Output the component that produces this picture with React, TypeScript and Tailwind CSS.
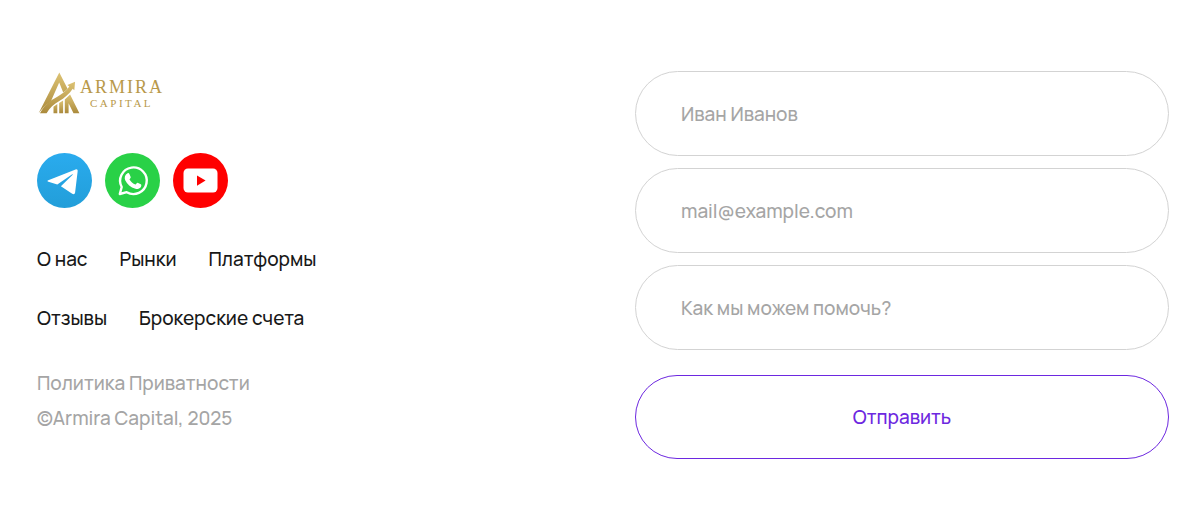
import React from "react";

const NAV_LINKS = ["О нас", "Рынки", "Платформы", "Отзывы", "Брокерские счета"];

const FIELDS = [
  { id: "name", type: "text", label: "Имя", placeholder: "Иван Иванов" },
  { id: "email", type: "email", label: "Email", placeholder: "mail@example.com" },
  { id: "message", type: "text", label: "Сообщение", placeholder: "Как мы можем помочь?" },
];

const Logo: React.FC = () => (
  <svg viewBox="0 1 126 44" className="w-[126px] h-11" role="img" aria-label="Armira Capital">
    <defs>
      <linearGradient id="gold" x1="0" y1="0" x2="0" y2="1">
        <stop offset="0" stopColor="#dcc273" />
        <stop offset="1" stopColor="#ab8a3c" />
      </linearGradient>
    </defs>
    <g fill="url(#gold)">
      {/* Two upper sides of the A */}
      <path d="M22.300 2.500 1.600 43.200c3.200-4.600 7.200-8.200 12-11.200L22.200 12.500l4 10c1.700-1.200 3.100-2.400 4.400-3.800z" />
      {/* Rising arrow */}
      <path d="M3 43.200h6.600c3-5.300 7.200-9 12.700-12.200 5.600-3.300 9.900-7 13.400-12.200l1.600 1.400.8-8.400-7.700 3.300 1.900 1.500c-3.200 4.600-7 7.400-12 10.200C12.300 31 6.600 36.300 3 43.200z" />
      <path d="M16.500 36.800l3.800-2.800v9.200h-3.800zM22.200 32.900l3.900-2.400v12.700h-3.900z" />
      {/* Right leg */}
      <path d="M27.800 29.400l5.300-4.800 9.300 18.600h-5.900l-4.900-9.900v9.900h-3.800z" />
    </g>
    <g fill="#b8994a" fontFamily="'Liberation Serif', serif">
      <text x="43" y="23" fontSize="18" letterSpacing="2">ARMIRA</text>
      <text x="53" y="37" fontSize="11" letterSpacing="2.500">CAPITAL</text>
    </g>
  </svg>
);

const Telegram: React.FC = () => (
  <svg viewBox="0 0 55 55" className="size-[55px]" aria-hidden="true">
    <defs>
      <linearGradient id="telegram" x1="0" y1="0" x2="0" y2="1">
        <stop offset="0" stopColor="#2aabee" />
        <stop offset="1" stopColor="#229ed9" />
      </linearGradient>
    </defs>
    <circle cx="27.500" cy="27.500" r="27.500" fill="url(#telegram)" />
    <path
      fill="#fff"
      d="M11.300 27.300 38.600 16.500c1.300-.5 2.400.3 2 2.200l-2.500 20.900c-.3 1.700-1.500 2.100-2.900 1.200l-11.300-7.500 11.800-11.600c.5-.5-.1-.8-.8-.3L20.300 31.500l-8.900-2.700c-1.100-.3-1.200-1.100-.1-1.500z"
    />
  </svg>
);

const WhatsApp: React.FC = () => (
  <svg viewBox="0 0 55 55" className="size-[55px]" aria-hidden="true">
    <circle cx="27.500" cy="27.500" r="27.500" fill="#29d147" />
    <path
      fill="none"
      stroke="#fff"
      strokeWidth="2.400"
      strokeLinejoin="round"
      d="M14.800 41 16.700 34A13.300 13.300 0 1 1 21.700 39.200z"
    />
    <path
      fill="#fff"
      d="M22.600 20.200c.8-.2 1.500-.1 1.800.7l1.300 3c.3.900-.9 1.800-1.300 2.400 1.400 2.700 3.500 4.300 6 5.300.8-.4 1.400-2 2.200-1.900l3.200 1.600c.9.500.5 2-.1 2.900-1.100 1.500-3.400 2.100-5.200 1.600-5-1.300-8.400-4.500-10.300-8.500-1.100-2.600-.300-5.800 2.400-7.100z"
    />
  </svg>
);

const YouTube: React.FC = () => (
  <svg viewBox="0 0 55 55" className="size-[55px]" aria-hidden="true">
    <circle cx="27.500" cy="27.500" r="27.500" fill="#f00" />
    <rect x="10.500" y="15.500" width="34" height="24" rx="4.500" fill="#fff" />
    <path fill="#f00" d="M24 22.500v10.300l8.600-5.200z" />
  </svg>
);

export default function App() {
  return (
    <footer className="bg-white pt-[71px] pb-12 pl-[37px] pr-8 font-['Manrope','Inter',sans-serif] text-[19px] leading-[35px] font-medium text-[#181818]">
      <div className="grid grid-cols-2 gap-16">
        <div>
          <a href="#" className="block w-fit">
            <Logo />
          </a>

          <div className="mt-[38px] flex gap-[13px]">
            <a href="#telegram" aria-label="Telegram">
              <Telegram />
            </a>
            <a href="#whatsapp" aria-label="WhatsApp">
              <WhatsApp />
            </a>
            <a href="#youtube" aria-label="YouTube">
              <YouTube />
            </a>
          </div>

          <nav className="mt-[34px] flex max-w-[340px] flex-wrap gap-x-8 gap-y-6">
            {NAV_LINKS.map((link) => (
              <a key={link} href="#" className="whitespace-nowrap">
                {link}
              </a>
            ))}
          </nav>

          <div className="mt-[30px] text-[#a5a5a5]">
            <a href="#privacy" className="block w-fit">
              Политика Приватности
            </a>
            <p>©Armira Capital, 2025</p>
          </div>
        </div>

        <form className="flex flex-col gap-3" onSubmit={(e) => e.preventDefault()}>
          {FIELDS.map((field) => (
            <input
              key={field.id}
              id={field.id}
              type={field.type}
              aria-label={field.label}
              placeholder={field.placeholder}
              className="h-[85px] w-full rounded-full border border-[#d3d3d3] px-[45px] outline-none placeholder:text-[#a5a5a5]"
            />
          ))}
          <button
            type="submit"
            className="mt-[13px] h-[84px] w-full cursor-pointer rounded-full border border-[#6d28e0] text-[#6d28e0]"
          >
            Отправить
          </button>
        </form>
      </div>
    </footer>
  );
}
